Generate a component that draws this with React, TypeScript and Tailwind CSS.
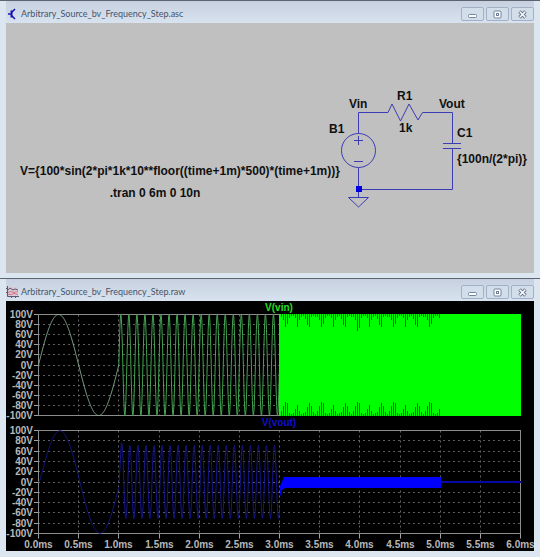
import type { ReactNode } from 'react';

const PLOT_LEFT = 32;
const PLOT_WIDTH = 482;
const MS = PLOT_WIDTH / 6;
const TAU = 0.1 / (2 * Math.PI);

const volts = [100, 80, 60, 40, 20, 0, -20, -40, -60, -80, -100];
const times = Array.from({ length: 13 }, (_, i) => i / 2);

const px = (t: number) => PLOT_LEFT + 0.5 + t * MS;

// frequency in kHz, time in ms
function vin(t: number) {
  return 100 * Math.sin(2 * Math.PI * (t < 1 ? 1 : 10) * (t + 1));
}

function vout(t: number) {
  const f = t < 1 ? 1 : 10;
  const ratio = f / 10;
  const phase = Math.atan(ratio);
  const gain = 100 / Math.sqrt(1 + ratio * ratio);
  const start = t < 1 ? 0 : 1;
  const offset = gain * Math.sin(phase) * Math.exp(-(t - start) / TAU);
  return gain * Math.sin(2 * Math.PI * f * (t - start) - phase) + offset;
}

function trace(fn: (t: number) => number, from: number, to: number, top: number, height: number) {
  const points: string[] = [];
  const steps = Math.round((to - from) * 400);
  for (let i = 0; i <= steps; i++) {
    const t = from + ((to - from) * i) / steps;
    const y = top + height / 2 - (fn(Math.min(t, to - 0.0001)) / 200) * height;
    points.push(`${px(t).toFixed(2)},${y.toFixed(2)}`);
  }
  return points.join(' ');
}

// gaps left by the undersampled 100 kHz section
const topGaps = [3, 6, 13, 10, 4, 2, 2, 4, 13, 6, 3, 2, 5, 11, 13, 3, 2, 3];
const bottomGaps = [5, 10, 14, 13, 3, 2, 3, 7, 11, 5, 2, 3, 4, 9, 13, 10, 4, 2];

function gaps(top: number, bottom: number) {
  let d = '';
  for (let i = 0; i < 80; i++) {
    const x = 275.5 + i * 2;
    const extra = i === 38 || i === 39 ? 4 : 0;
    d += `M${x} ${top}v${topGaps[i % 18] + extra}`;
    d += `M${x} ${bottom}v${-bottomGaps[i % 18]}`;
  }
  return d;
}

function Grid({ top, height, showTimes }: { top: number; height: number; showTimes?: boolean }) {
  const right = PLOT_LEFT + PLOT_WIDTH;
  return (
    <g>
      {volts.map((v, i) => {
        const y = Math.round(top + (height * i) / 10 - 0.5) + 0.5;
        return (
          <g key={v}>
            <path d={`M28 ${y}h5`} stroke="#a0a0a0" />
            {i > 0 && i < 10 && (
              <path d={`M${PLOT_LEFT} ${y}H${right}`} stroke="#5c5c5c" strokeDasharray="2 3" />
            )}
            <text x="27" y={y + 3} textAnchor="end" fill="#b8b8b8">
              {v}V
            </text>
          </g>
        );
      })}
      {times.map((t, i) => {
        const x = Math.round(px(t) - 0.5) + 0.5;
        return (
          <g key={t}>
            {i > 0 && i < 12 && (
              <path d={`M${x} ${top}v${height}`} stroke="#646464" strokeDasharray="2 3" />
            )}
            {showTimes && (
              <>
                <path d={`M${x} ${top + height}v5`} stroke="#a0a0a0" />
                <text x={x} y={top + height + 14} textAnchor="middle" fill="#b8b8b8">
                  {t.toFixed(1)}ms
                </text>
              </>
            )}
          </g>
        );
      })}
      <rect x={PLOT_LEFT + 0.5} y={top} width={PLOT_WIDTH} height={height} stroke="#8c8c8c" />
    </g>
  );
}

function Waveforms() {
  const zero = 181;
  return (
    <svg
      viewBox="0 0 528 250"
      className="block h-auto w-full bg-black font-['Liberation_Sans',Arial,sans-serif] text-[10px] font-bold"
      fill="none"
      role="img"
      aria-label="V(vin) and V(vout) against time"
    >
      <Grid top={13.5} height={101} />
      <polyline points={trace(vin, 0, 1, 13.5, 101)} stroke="#8cb496" />
      <polyline points={trace(vin, 1, 3, 13.5, 101)} stroke="#45a552" />
      <rect x="273" y="13" width="242" height="102" fill="#00ff00" />
      <path d={gaps(13, 115)} stroke="#046404" />
      <text x="273" y="10" textAnchor="middle" fill="#22e022">
        V(vin)
      </text>

      <Grid top={129.5} height={103} showTimes />
      <polyline points={trace(vout, 0, 1, 129.5, 103)} stroke="#17178c" />
      <polyline points={trace(vout, 1, 3, 129.5, 103)} stroke="#17178c" />
      <path
        d={`M274 ${zero + 15}V${zero + 4}L278 ${zero - 5}H435V${zero + 6}H279L276 ${zero + 8}Z`}
        fill="#0000ff"
      />
      <path d={`M435 ${zero}H516`} stroke="#0808a8" strokeWidth="2" />
      <text x="273" y="125" textAnchor="middle" fill="#1010c8">
        V(vout)
      </text>
    </svg>
  );
}

function Schematic() {
  return (
    <svg
      viewBox="0 0 528 250"
      className="block h-auto w-full bg-[#c0c0c0] font-['Liberation_Sans',Arial,sans-serif] text-[12px] font-bold"
      fill="none"
      role="img"
      aria-label="RC low pass circuit"
    >
      <g stroke="#3c3cb4">
        <path d="M352.5 110.500V89.500H382L386 81L394.500 98L403 81L412 97L416.500 89.500H446.500V120.500" />
        <path d="M437 120.500h18M437 125.500h18M446.500 125.500V166.500H352.500M352.500 144.500V174.500" />
        <circle cx="352.5" cy="127.500" r="17" />
        <path d="M348 117.500h9M352.500 113v9M348 138.500h9" />
        <path d="M342.500 174.500h20L352.500 184Z" />
      </g>
      <rect x="350" y="163" width="6" height="6" fill="#0000e0" />
      <g fill="#101010">
        <text x="343" y="85">Vin</text>
        <text x="391" y="77">R1</text>
        <text x="393" y="109">1k</text>
        <text x="433" y="85">Vout</text>
        <text x="323" y="110">B1</text>
        <text x="451" y="114">C1</text>
        <text x="451" y="140">{'{100n/(2*pi)}'}</text>
        <text x="174" y="152" textAnchor="middle">
          {'V={100*sin(2*pi*1k*10**floor((time+1m)*500)*(time+1m))}'}
        </text>
        <text x="149" y="174" textAnchor="middle">
          .tran 0 6m 0 10n
        </text>
      </g>
    </svg>
  );
}

function CaptionButton({ label, children }: { label: string; children: ReactNode }) {
  return (
    <button
      type="button"
      aria-label={label}
      className="flex h-3.5 w-[23px] items-center justify-center rounded-xs border border-[#a3b1c6] bg-[#d3deeb]"
    >
      <svg width="11" height="9" viewBox="0 0 11 9" fill="none">
        {children}
      </svg>
    </button>
  );
}

function Window({ title, icon, children }: { title: string; icon: ReactNode; children: ReactNode }) {
  return (
    <section className="border-t border-[#5c6470] bg-[#dbe6f0] px-1.5 pb-[5px]">
      <header className="flex h-[22px] items-center bg-linear-to-b from-[#c6d0df] to-[#d8e3ef] pt-1">
        <span className="flex w-[15px] shrink-0">{icon}</span>
        <h1 className="min-w-0 flex-1 truncate font-['Lato','Open_Sans',sans-serif] text-[9px] leading-3 text-[#46546a]">
          {title}
        </h1>
        <div className="flex gap-0.5">
          <CaptionButton label="Minimize">
            <rect x="1.5" y="4.500" width="8" height="3" rx="1" fill="#fff" stroke="#74839c" />
          </CaptionButton>
          <CaptionButton label="Maximize">
            <rect x="2" y="1" width="7" height="7" rx="1" fill="#fff" stroke="#74839c" />
            <rect x="4.500" y="3.500" width="2" height="2" stroke="#74839c" />
          </CaptionButton>
          <CaptionButton label="Close">
            <path d="M2.500 1.500l6 6M8.500 1.500l-6 6" stroke="#6c7b94" strokeWidth="3.500" />
            <path d="M2.800 1.800l5.400 5.400M8.200 1.800l-5.400 5.400" stroke="#fff" strokeWidth="1.500" />
          </CaptionButton>
        </div>
      </header>
      {children}
    </section>
  );
}

function SchematicIcon() {
  return (
    <svg width="12" height="12" viewBox="0 0 12 12" fill="none" stroke="#1414b4" strokeWidth="2">
      <path d="M2 6h3" strokeWidth="1.500" />
      <path d="M5.500 2.500v7" />
      <path d="M5.500 4.500L9 1M5.500 7.500L9 11" strokeWidth="1.500" />
    </svg>
  );
}

function WaveformIcon() {
  return (
    <svg width="13" height="12" viewBox="0 0 13 12" fill="none">
      <rect x="2" y="1" width="10" height="9" fill="#dcc8d2" />
      <path d="M1.500 0v10.500H13M0 2.500h2M0 6.500h2M5.500 10v2M9.500 10v2" stroke="#5c5870" />
      <path d="M2 4l2-2 3 2 2-1 3 1" stroke="#5c5870" />
      <path d="M2 6.500l3-1 3 1 4-1M2 8.500l3 0 3-1 4 1" stroke="#d4788c" />
    </svg>
  );
}

export default function App() {
  return (
    <main className="min-h-screen bg-[#dbe6f0]">
      <Window title="Arbitrary_Source_bv_Frequency_Step.asc" icon={<SchematicIcon />}>
        <Schematic />
      </Window>
      <Window title="Arbitrary_Source_bv_Frequency_Step.raw" icon={<WaveformIcon />}>
        <Waveforms />
      </Window>
    </main>
  );
}
